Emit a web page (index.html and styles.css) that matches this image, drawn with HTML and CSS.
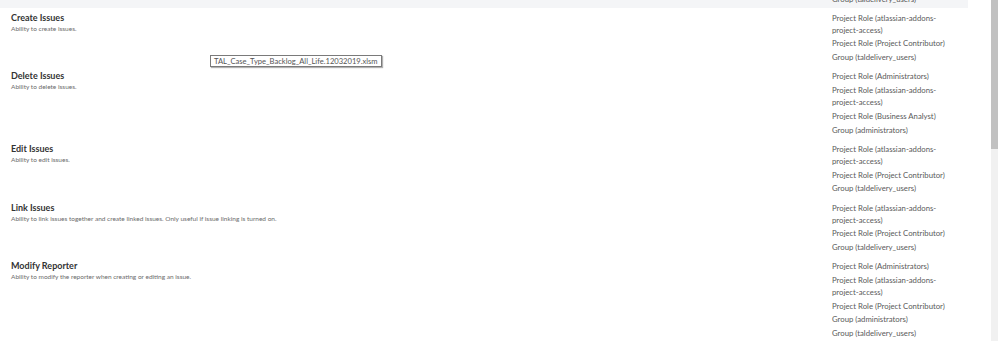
FILE: index.html
```html
<!DOCTYPE html>
<html>
<head>
<meta charset="utf-8">
<link rel="stylesheet" href="styles.css">
</head>
<body>
<div class="screen">
  <main class="perms">
    <div class="row row-prev">
      <div class="perm"></div>
      <ul class="grants"><li>Group (taldelivery_users)</li></ul>
    </div>
    <div class="row">
      <div class="perm"><div class="perm-name">Create Issues</div><div class="perm-desc">Ability to create issues.</div></div>
      <ul class="grants">
        <li>Project Role (atlassian-addons-project-access)</li>
        <li>Project Role (Project Contributor)</li>
        <li>Group (taldelivery_users)</li>
      </ul>
    </div>
    <div class="row">
      <div class="perm"><div class="perm-name">Delete Issues</div><div class="perm-desc">Ability to delete issues.</div></div>
      <ul class="grants">
        <li>Project Role (Administrators)</li>
        <li>Project Role (atlassian-addons-project-access)</li>
        <li>Project Role (Business Analyst)</li>
        <li>Group (administrators)</li>
      </ul>
    </div>
    <div class="row">
      <div class="perm"><div class="perm-name">Edit Issues</div><div class="perm-desc">Ability to edit issues.</div></div>
      <ul class="grants">
        <li>Project Role (atlassian-addons-project-access)</li>
        <li>Project Role (Project Contributor)</li>
        <li>Group (taldelivery_users)</li>
      </ul>
    </div>
    <div class="row">
      <div class="perm"><div class="perm-name">Link Issues</div><div class="perm-desc">Ability to link issues together and create linked issues. Only useful if issue linking is turned on.</div></div>
      <ul class="grants">
        <li>Project Role (atlassian-addons-project-access)</li>
        <li>Project Role (Project Contributor)</li>
        <li>Group (taldelivery_users)</li>
      </ul>
    </div>
    <div class="row">
      <div class="perm"><div class="perm-name">Modify Reporter</div><div class="perm-desc">Ability to modify the reporter when creating or editing an issue.</div></div>
      <ul class="grants">
        <li>Project Role (Administrators)</li>
        <li>Project Role (atlassian-addons-project-access)</li>
        <li>Project Role (Project Contributor)</li>
        <li>Group (administrators)</li>
        <li>Group (taldelivery_users)</li>
      </ul>
    </div>
  </main>
  <div class="scrollbar"><div class="thumb"></div></div>
  <div class="tooltip">TAL_Case_Type_Backlog_All_Life.12032019.xlsm</div>
</div>
</body>
</html>
```
FILE: styles.css
```css
html, body {
  margin: 0;
  padding: 0;
  background: #fff;
  overflow: hidden;
}
body {
  width: 998px;
  height: 341px;
  font-family: "Lato", "Liberation Sans", sans-serif;
  color: #555;
}
.screen {
  position: relative;
  display: flex;
  width: 998px;
  height: 341px;
  overflow: hidden;
}
.perms {
  width: 968px;
  flex: none;
}
.row {
  display: grid;
  grid-template-columns: 1fr 136px;
  padding: 3.7px 0 3.7px 11px;
}
.row-prev {
  background: #f4f5f7;
  height: 8px;
  box-sizing: border-box;
  padding-top: 0;
  padding-bottom: 0;
  overflow: hidden;
}
.row-prev .grants {
  margin-top: -7.5px;
}
.perm-name {
  font-weight: 700;
  font-size: 9px;
  line-height: 11px;
  color: #333;
}
.perm-desc {
  font-size: 6.5px;
  line-height: 11px;
  color: #6b6b6b;
}
.grants {
  list-style: none;
  margin: 0;
  padding: 0;
  width: 122px;
  font-size: 7.75px;
  line-height: 12px;
  color: #5a5a5a;
}
.grants li {
  margin: 0 0 1.7px;
}
.grants li:last-child {
  margin-bottom: 0;
}
.scrollbar {
  margin-left: auto;
  width: 7px;
  height: 341px;
  background: #f1f1f1;
}
.thumb {
  height: 149px;
  background: #c1c1c1;
}
.tooltip {
  position: absolute;
  left: 210px;
  top: 55px;
  height: 12px;
  box-sizing: border-box;
  padding: 0 3px;
  border: 1px solid #7a7a7a;
  background: #fff;
  box-shadow: 1px 1px 1px rgba(0,0,0,0.3);
  font-size: 7.6px;
  line-height: 10px;
  color: #555;
  white-space: nowrap;
}
```
